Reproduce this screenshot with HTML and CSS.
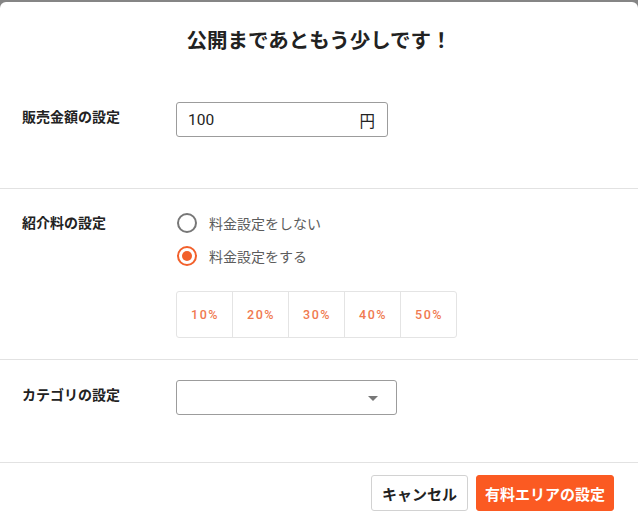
FILE: index.html
```html
<!DOCTYPE html>
<html lang="ja">
<head>
<meta charset="utf-8">
<title>公開まであともう少しです！</title>
<link rel="stylesheet" href="styles.css">
</head>
<body>
<div class="modal">
  <header class="modal-header">
    <h1 class="title">公開まであともう少しです！</h1>
  </header>

  <section class="row row-price">
    <div class="label">販売金額の設定</div>
    <div class="control">
      <div class="price-input">
        <span class="price-value">100</span>
        <span class="price-unit">円</span>
      </div>
    </div>
  </section>

  <section class="row row-fee">
    <div class="label label-top">紹介料の設定</div>
    <div class="control">
      <div class="radio-list">
        <label class="radio">
          <span class="radio-mark"></span>
          <span class="radio-text">料金設定をしない</span>
        </label>
        <label class="radio radio-checked">
          <span class="radio-mark"></span>
          <span class="radio-text">料金設定をする</span>
        </label>
      </div>
      <div class="pct-group">
        <div class="pct">10%</div>
        <div class="pct">20%</div>
        <div class="pct">30%</div>
        <div class="pct">40%</div>
        <div class="pct">50%</div>
      </div>
    </div>
  </section>

  <section class="row row-cat">
    <div class="label">カテゴリの設定</div>
    <div class="control">
      <div class="select">
        <span class="caret"></span>
      </div>
    </div>
  </section>

  <footer class="modal-footer">
    <button class="btn btn-cancel">キャンセル</button>
    <button class="btn btn-primary">有料エリアの設定</button>
  </footer>
</div>
</body>
</html>
```
FILE: styles.css
```css
html, body {
  margin: 0;
  padding: 0;
}
body {
  background: #858585;
  font-family: Roboto, "Noto Sans CJK JP", "Noto Sans", sans-serif;
  color: #222;
  height: 521px;
  overflow: hidden;
}
.modal {
  margin-top: 2px;
  background: #fff;
  border-radius: 6px 6px 0 0;
  height: 519px;
}
.modal-header {
  padding-top: 25px;
  text-align: center;
}
.title {
  margin: 0;
  font-size: 20.5px;
  line-height: 28px;
  font-weight: 700;
  color: #222;
}
.row {
  display: flex;
  padding-left: 22px;
}
.label {
  width: 154px;
  flex: none;
  font-size: 14px;
  font-weight: 700;
  color: #222;
  line-height: 22px;
}
.row-price {
  align-items: center;
  padding-top: 47px;
  padding-bottom: 51px;
}
.row-price .label,
.row-cat .label {
  position: relative;
  top: -3px;
}
.row-fee {
  border-top: 1px solid #e2e2e2;
  padding-top: 23px;
  padding-bottom: 21px;
}
.row-cat {
  align-items: center;
  border-top: 1px solid #e2e2e2;
  padding-top: 20px;
  padding-bottom: 47px;
}
.price-input {
  box-sizing: border-box;
  width: 212px;
  height: 35px;
  border: 1px solid #9c9c9c;
  border-radius: 3px;
  display: flex;
  align-items: center;
  justify-content: space-between;
  padding: 0 12px 0 11px;
  font-size: 15.5px;
  color: #222;
}
.radio-list {
  display: flex;
  flex-direction: column;
  gap: 11px;
}
.radio {
  display: flex;
  align-items: center;
  height: 22px;
  gap: 12px;
}
.radio-mark {
  box-sizing: border-box;
  width: 20px;
  height: 20px;
  border: 2px solid #777;
  border-radius: 50%;
  display: flex;
  align-items: center;
  justify-content: center;
  margin-left: 1px;
}
.radio-checked .radio-mark {
  border-color: #f2602b;
}
.radio-checked .radio-mark::after {
  content: "";
  width: 10px;
  height: 10px;
  border-radius: 50%;
  background: #f2602b;
}
.radio-text {
  font-size: 14px;
  color: #5c5c5c;
}
.pct-group {
  margin-top: 24px;
  display: flex;
  width: 281px;
  height: 47px;
  box-sizing: border-box;
  border: 1px solid #e4e4e4;
  border-radius: 3px;
}
.pct {
  flex: 1;
  display: flex;
  align-items: center;
  justify-content: center;
  font-size: 12.5px;
  font-weight: 500;
  letter-spacing: 1.5px;
  color: #f07a50;
  border-left: 1px solid #e4e4e4;
  padding-left: 1px;
}
.pct:first-child {
  border-left: none;
}
.select {
  box-sizing: border-box;
  width: 221px;
  height: 35px;
  border: 1px solid #9c9c9c;
  border-radius: 3px;
  display: flex;
  align-items: center;
  justify-content: flex-end;
  padding-right: 18px;
}
.caret {
  width: 0;
  height: 0;
  border-left: 5px solid transparent;
  border-right: 5px solid transparent;
  border-top: 5px solid #777;
  margin-top: 2px;
}
.modal-footer {
  border-top: 1px solid #e2e2e2;
  padding: 12px 24px 0 0;
  display: flex;
  justify-content: flex-end;
  gap: 8px;
}
.btn {
  font-family: inherit;
  height: 36px;
  border-radius: 3px;
  font-size: 15px;
  font-weight: 700;
  padding: 0;
  cursor: pointer;
}
.btn-cancel {
  background: #fff;
  border: 1px solid #d2d2d2;
  color: #222;
  width: 97px;
}
.btn-primary {
  background: #fb5a22;
  border: 1px solid #fb5a22;
  color: #fff;
  width: 138px;
}
```
